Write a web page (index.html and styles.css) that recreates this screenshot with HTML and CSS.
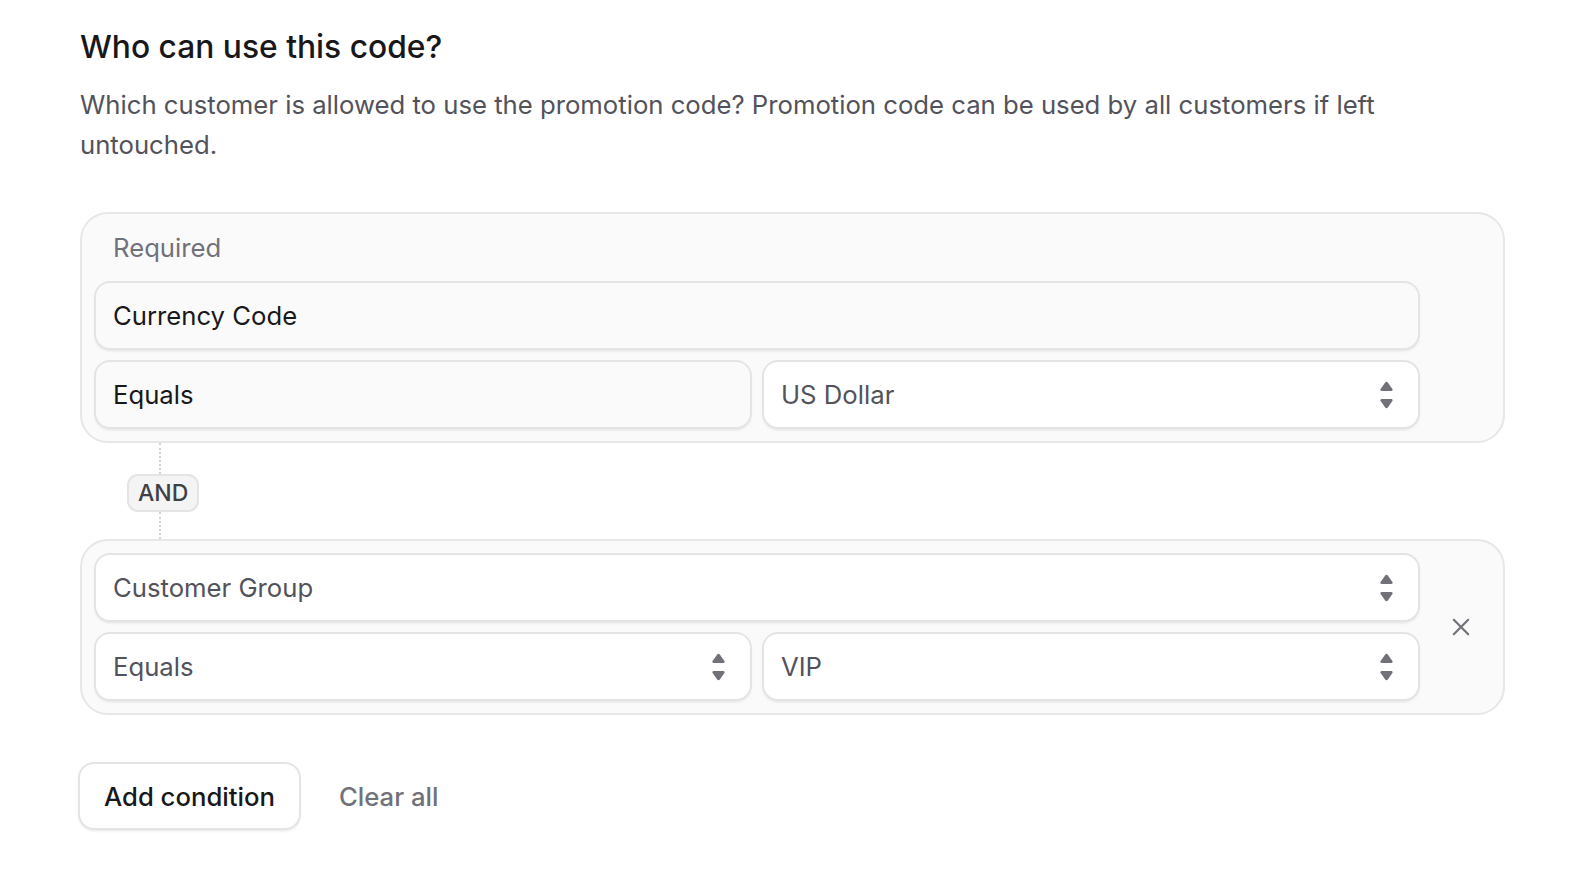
FILE: index.html
```html
<!DOCTYPE html>
<html lang="en">
<head>
<meta charset="utf-8">
<title>Who can use this code?</title>
<link rel="stylesheet" href="styles.css">
</head>
<body>
<div class="card">
  <h2 class="title">Who can use this code?</h2>
  <p class="desc">Which customer is allowed to use the promotion code? Promotion code can be used by all customers if left untouched.</p>

  <div class="conditions">
    <div class="group">
      <div class="fields">
        <div class="label">Required</div>
        <div class="field disabled">Currency Code</div>
        <div class="row">
          <div class="field disabled">Equals</div>
          <div class="field select"><span class="value">US Dollar</span>
            <svg class="chev" viewBox="0 0 16 30" aria-hidden="true"><path d="M6.6 1.6a1.7 1.7 0 0 1 2.8 0l4.9 7a1.3 1.3 0 0 1-1.1 2.1H2.8A1.3 1.3 0 0 1 1.7 8.6z"/><path d="M6.6 28.4a1.7 1.7 0 0 0 2.8 0l4.9-7a1.3 1.3 0 0 0-1.1-2.1H2.8a1.3 1.3 0 0 0-1.1 2.1z"/></svg>
          </div>
        </div>
      </div>
      <div class="side"></div>
    </div>

    <div class="connector">
      <div class="dots top"></div>
      <div class="badge">AND</div>
      <div class="dots bottom"></div>
    </div>

    <div class="group">
      <div class="fields">
        <div class="field select"><span class="value">Customer Group</span>
          <svg class="chev" viewBox="0 0 16 30" aria-hidden="true"><path d="M6.6 1.6a1.7 1.7 0 0 1 2.8 0l4.9 7a1.3 1.3 0 0 1-1.1 2.1H2.8A1.3 1.3 0 0 1 1.7 8.6z"/><path d="M6.6 28.4a1.7 1.7 0 0 0 2.8 0l4.9-7a1.3 1.3 0 0 0-1.1-2.1H2.8a1.3 1.3 0 0 0-1.1 2.1z"/></svg>
        </div>
        <div class="row">
          <div class="field select"><span class="value">Equals</span>
            <svg class="chev" viewBox="0 0 16 30" aria-hidden="true"><path d="M6.6 1.6a1.7 1.7 0 0 1 2.8 0l4.9 7a1.3 1.3 0 0 1-1.1 2.1H2.8A1.3 1.3 0 0 1 1.7 8.6z"/><path d="M6.6 28.4a1.7 1.7 0 0 0 2.8 0l4.9-7a1.3 1.3 0 0 0-1.1-2.1H2.8a1.3 1.3 0 0 0-1.1 2.1z"/></svg>
          </div>
          <div class="field select"><span class="value">VIP</span>
            <svg class="chev" viewBox="0 0 16 30" aria-hidden="true"><path d="M6.6 1.6a1.7 1.7 0 0 1 2.8 0l4.9 7a1.3 1.3 0 0 1-1.1 2.1H2.8A1.3 1.3 0 0 1 1.7 8.6z"/><path d="M6.6 28.4a1.7 1.7 0 0 0 2.8 0l4.9-7a1.3 1.3 0 0 0-1.1-2.1H2.8a1.3 1.3 0 0 0-1.1 2.1z"/></svg>
          </div>
        </div>
      </div>
      <div class="side">
        <button class="remove" aria-label="Remove condition">
          <svg viewBox="0 0 20 20" aria-hidden="true"><path d="M2 2l16 16M18 2L2 18"/></svg>
        </button>
      </div>
    </div>
  </div>

  <div class="actions">
    <button class="btn">Add condition</button>
    <button class="link">Clear all</button>
  </div>
</div>
</body>
</html>
```

FILE: styles.css
```css
* { box-sizing: border-box; }

html, body {
  margin: 0;
  padding: 0;
  background: #ffffff;
  overflow: hidden;
}

body {
  font-family: Inter, "Noto Sans", "Liberation Sans", sans-serif;
  color: #18181b;
  -webkit-font-smoothing: antialiased;
}

.card {
  width: 100%;
  height: 100vh;
  border-radius: 16px;
  padding: 25px 77px 0 80px;
  background: #fff;
}

.title {
  margin: 0;
  font-size: 31.75px;
  line-height: 44px;
  font-weight: 500;
  color: #18181b;
}

.desc {
  margin: 16px 0 0;
  font-size: 25.7px;
  line-height: 40px;
  font-weight: 400;
  color: #52525b;
}

.conditions {
  margin-top: 47px;
  display: flex;
  flex-direction: column;
}

.group {
  display: grid;
  grid-template-columns: 1fr 85px;
  background: #fafafa;
  border: 2px solid #e7e7e9;
  border-radius: 28px;
  padding: 14px 0 14px 14px;
}

.fields {
  display: flex;
  flex-direction: column;
  gap: 14px;
}

.label {
  padding: 0 17px;
  margin-bottom: 1px;
  font-size: 25.7px;
  line-height: 40px;
  color: #71717a;
}

.row {
  display: grid;
  grid-template-columns: 1fr 1fr;
  gap: 14px;
}

.field {
  height: 65px;
  display: flex;
  align-items: center;
  justify-content: space-between;
  padding: 0 24px 0 17px;
  border-radius: 14px;
  background: #ffffff;
  font-size: 25.7px;
  color: #52525b;
  box-shadow: 0 0 0 2px #e4e4e7, 0 2px 3px 1px rgba(0, 0, 0, 0.1);
}

.field.disabled {
  background: #fafafa;
  color: #18181b;
}

.chev {
  width: 15px;
  height: 28px;
  fill: #71717a;
  flex: none;
}

.side {
  display: flex;
  align-items: center;
  justify-content: center;
}

.remove {
  border: 0;
  background: transparent;
  padding: 0;
  width: 24px;
  height: 24px;
  display: flex;
  align-items: center;
  justify-content: center;
  cursor: pointer;
}

.remove svg {
  width: 18px;
  height: 18px;
  stroke: #71717a;
  stroke-width: 2.4;
  stroke-linecap: round;
  fill: none;
}

.connector {
  display: flex;
  flex-direction: column;
  align-items: flex-start;
  margin-left: 47px;
}

.dots {
  width: 2px;
  margin-left: 32px;
  border-left: 2px dotted #d4d4d8;
}

.dots.top { height: 31px; }
.dots.bottom { height: 27px; }

.badge {
  height: 38px;
  padding: 0 9px;
  display: flex;
  align-items: center;
  border-radius: 11px;
  background: #f4f4f5;
  border: 2px solid #e4e4e7;
  font-size: 23px;
  font-weight: 500;
  color: #3f3f46;
}

.actions {
  margin-top: 49px;
  display: flex;
  align-items: center;
  gap: 40px;
}

.btn {
  height: 64px;
  padding: 0 24px;
  border: 0;
  border-radius: 14px;
  background: #fff;
  font-family: inherit;
  font-size: 25.7px;
  font-weight: 500;
  color: #18181b;
  box-shadow: 0 0 0 2px #e4e4e7, 0 2px 3px 1px rgba(0, 0, 0, 0.1);
  cursor: pointer;
}

.link {
  border: 0;
  background: transparent;
  padding: 0;
  font-family: inherit;
  font-size: 25.7px;
  font-weight: 500;
  color: #71717a;
  cursor: pointer;
}
```
